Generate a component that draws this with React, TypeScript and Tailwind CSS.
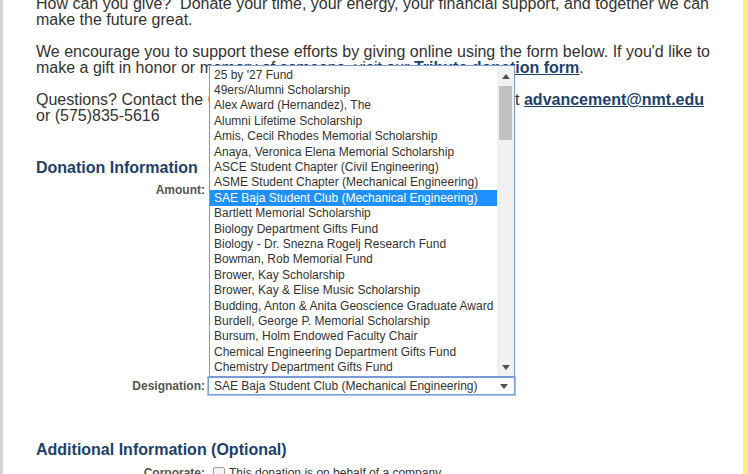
const funds = [
  "25 by '27 Fund",
  "49ers/Alumni Scholarship",
  "Alex Award (Hernandez), The",
  "Alumni Lifetime Scholarship",
  "Amis, Cecil Rhodes Memorial Scholarship",
  "Anaya, Veronica Elena Memorial Scholarship",
  "ASCE Student Chapter (Civil Engineering)",
  "ASME Student Chapter (Mechanical Engineering)",
  "SAE Baja Student Club (Mechanical Engineering)",
  "Bartlett Memorial Scholarship",
  "Biology Department Gifts Fund",
  "Biology - Dr. Snezna Rogelj Research Fund",
  "Bowman, Rob Memorial Fund",
  "Brower, Kay Scholarship",
  "Brower, Kay & Elise Music Scholarship",
  "Budding, Anton & Anita Geoscience Graduate Award",
  "Burdell, George P. Memorial Scholarship",
  "Bursum, Holm Endowed Faculty Chair",
  "Chemical Engineering Department Gifts Fund",
  "Chemistry Department Gifts Fund",
];

const selected = "SAE Baja Student Club (Mechanical Engineering)";

function Arrow({ down }: { down?: boolean }) {
  return (
    <svg width="8" height="5" viewBox="0 0 8 5" className="block">
      {down ? (
        <polygon points="0,0 8,0 4,5" fill="#505050" />
      ) : (
        <polygon points="0,5 8,5 4,0" fill="#505050" />
      )}
    </svg>
  );
}

function FundList() {
  return (
    <div className="absolute bottom-full left-[1px] flex h-[312px] w-[306px] border border-[#7a9cd6] bg-white">
      <div className="flex min-w-0 flex-1 flex-col overflow-hidden py-[1px]">
        {funds.map((f) => (
          <div
            key={f}
            className={`flex h-[15.4px] items-center whitespace-nowrap pl-[4px] text-[12px] leading-none ${
              f === selected ? "bg-[#1e90ff] text-white" : "text-[#333]"
            }`}
          >
            {f}
          </div>
        ))}
      </div>
      {/* scrollbar */}
      <div className="flex w-[17px] shrink-0 flex-col bg-[#f1f1f1]">
        <div className="flex h-[20px] items-center justify-center pt-[1px]">
          <Arrow />
        </div>
        <div className="mx-[2px] h-[54px] bg-[#c1c1c1]" />
        <div className="flex-1" />
        <div className="flex h-[17px] items-center justify-center">
          <Arrow down />
        </div>
      </div>
    </div>
  );
}

export default function App() {
  return (
    <div className="flex h-[474px] w-[748px] overflow-hidden bg-white font-['Liberation_Sans',Arial,sans-serif]">
      <div className="w-[3px] shrink-0 bg-[#d4d4d4]" />
      <div className="flex-1 pl-[33px] pr-[25px] text-[16px] leading-[16px] text-[#333]">
        <div className="-mt-[4px]">
          <p className="mb-[16px]">
            How can you give?{"\u00a0"} Donate your time, your energy, your financial support, and together we can
            make the future great.
          </p>
          <p className="mb-[16px]">
            We encourage you to support these efforts by giving online using the form below. If you'd like to
            make a gift in honor or memory of someone, visit our{" "}
            <a className="font-bold text-[#1d3f6e] underline">Tribute donation form</a>.
          </p>
          <p>
            Questions? Contact the Office of Advancement &amp; Alumni Services at{" "}
            <a className="font-bold text-[#1d3f6e] underline">advancement@nmt.edu</a> or (575)835-5616
          </p>
        </div>

        <h2 className="mt-[36px] text-[16px] font-bold leading-[16px] text-[#1d3f6e]">Donation Information</h2>

        <div className="mt-[7px] flex h-[194px] text-[12px] leading-[15px]">
          <div className="w-[169px] text-right font-bold text-[#555]">Amount:</div>
        </div>

        <div className="flex items-center text-[12px]">
          <div className="w-[169px] text-right font-bold leading-[15px] text-[#555]">Designation:</div>
          <div className="relative ml-[3px]">
            <FundList />
            <div className="flex h-[18px] w-[307px] items-center border border-[#7a9cd6] pl-[5px] pr-[6px] text-[12px] text-[#333] ring-1 ring-[#a9c4ef]">
              <span className="flex-1 whitespace-nowrap">{selected}</span>
              <Arrow down />
            </div>
          </div>
        </div>

        <h2 className="mt-[47px] text-[16px] font-bold leading-[16px] text-[#1d3f6e]">
          Additional Information (Optional)
        </h2>

        <div className="mt-[8px] flex items-start text-[12px] leading-[15px]">
          <div className="w-[169px] text-right font-bold text-[#555]">Corporate:</div>
          <div className="ml-[8px] mt-[1px] h-[13px] w-[12px] rounded-[2px] border border-[#a0a0a0] bg-[#f4f4f4]" />
          <span className="ml-[4px] text-[#333]">This donation is on behalf of a company.</span>
        </div>
      </div>
      <div className="w-[5px] shrink-0 bg-[#f8f08a]" />
    </div>
  );
}
